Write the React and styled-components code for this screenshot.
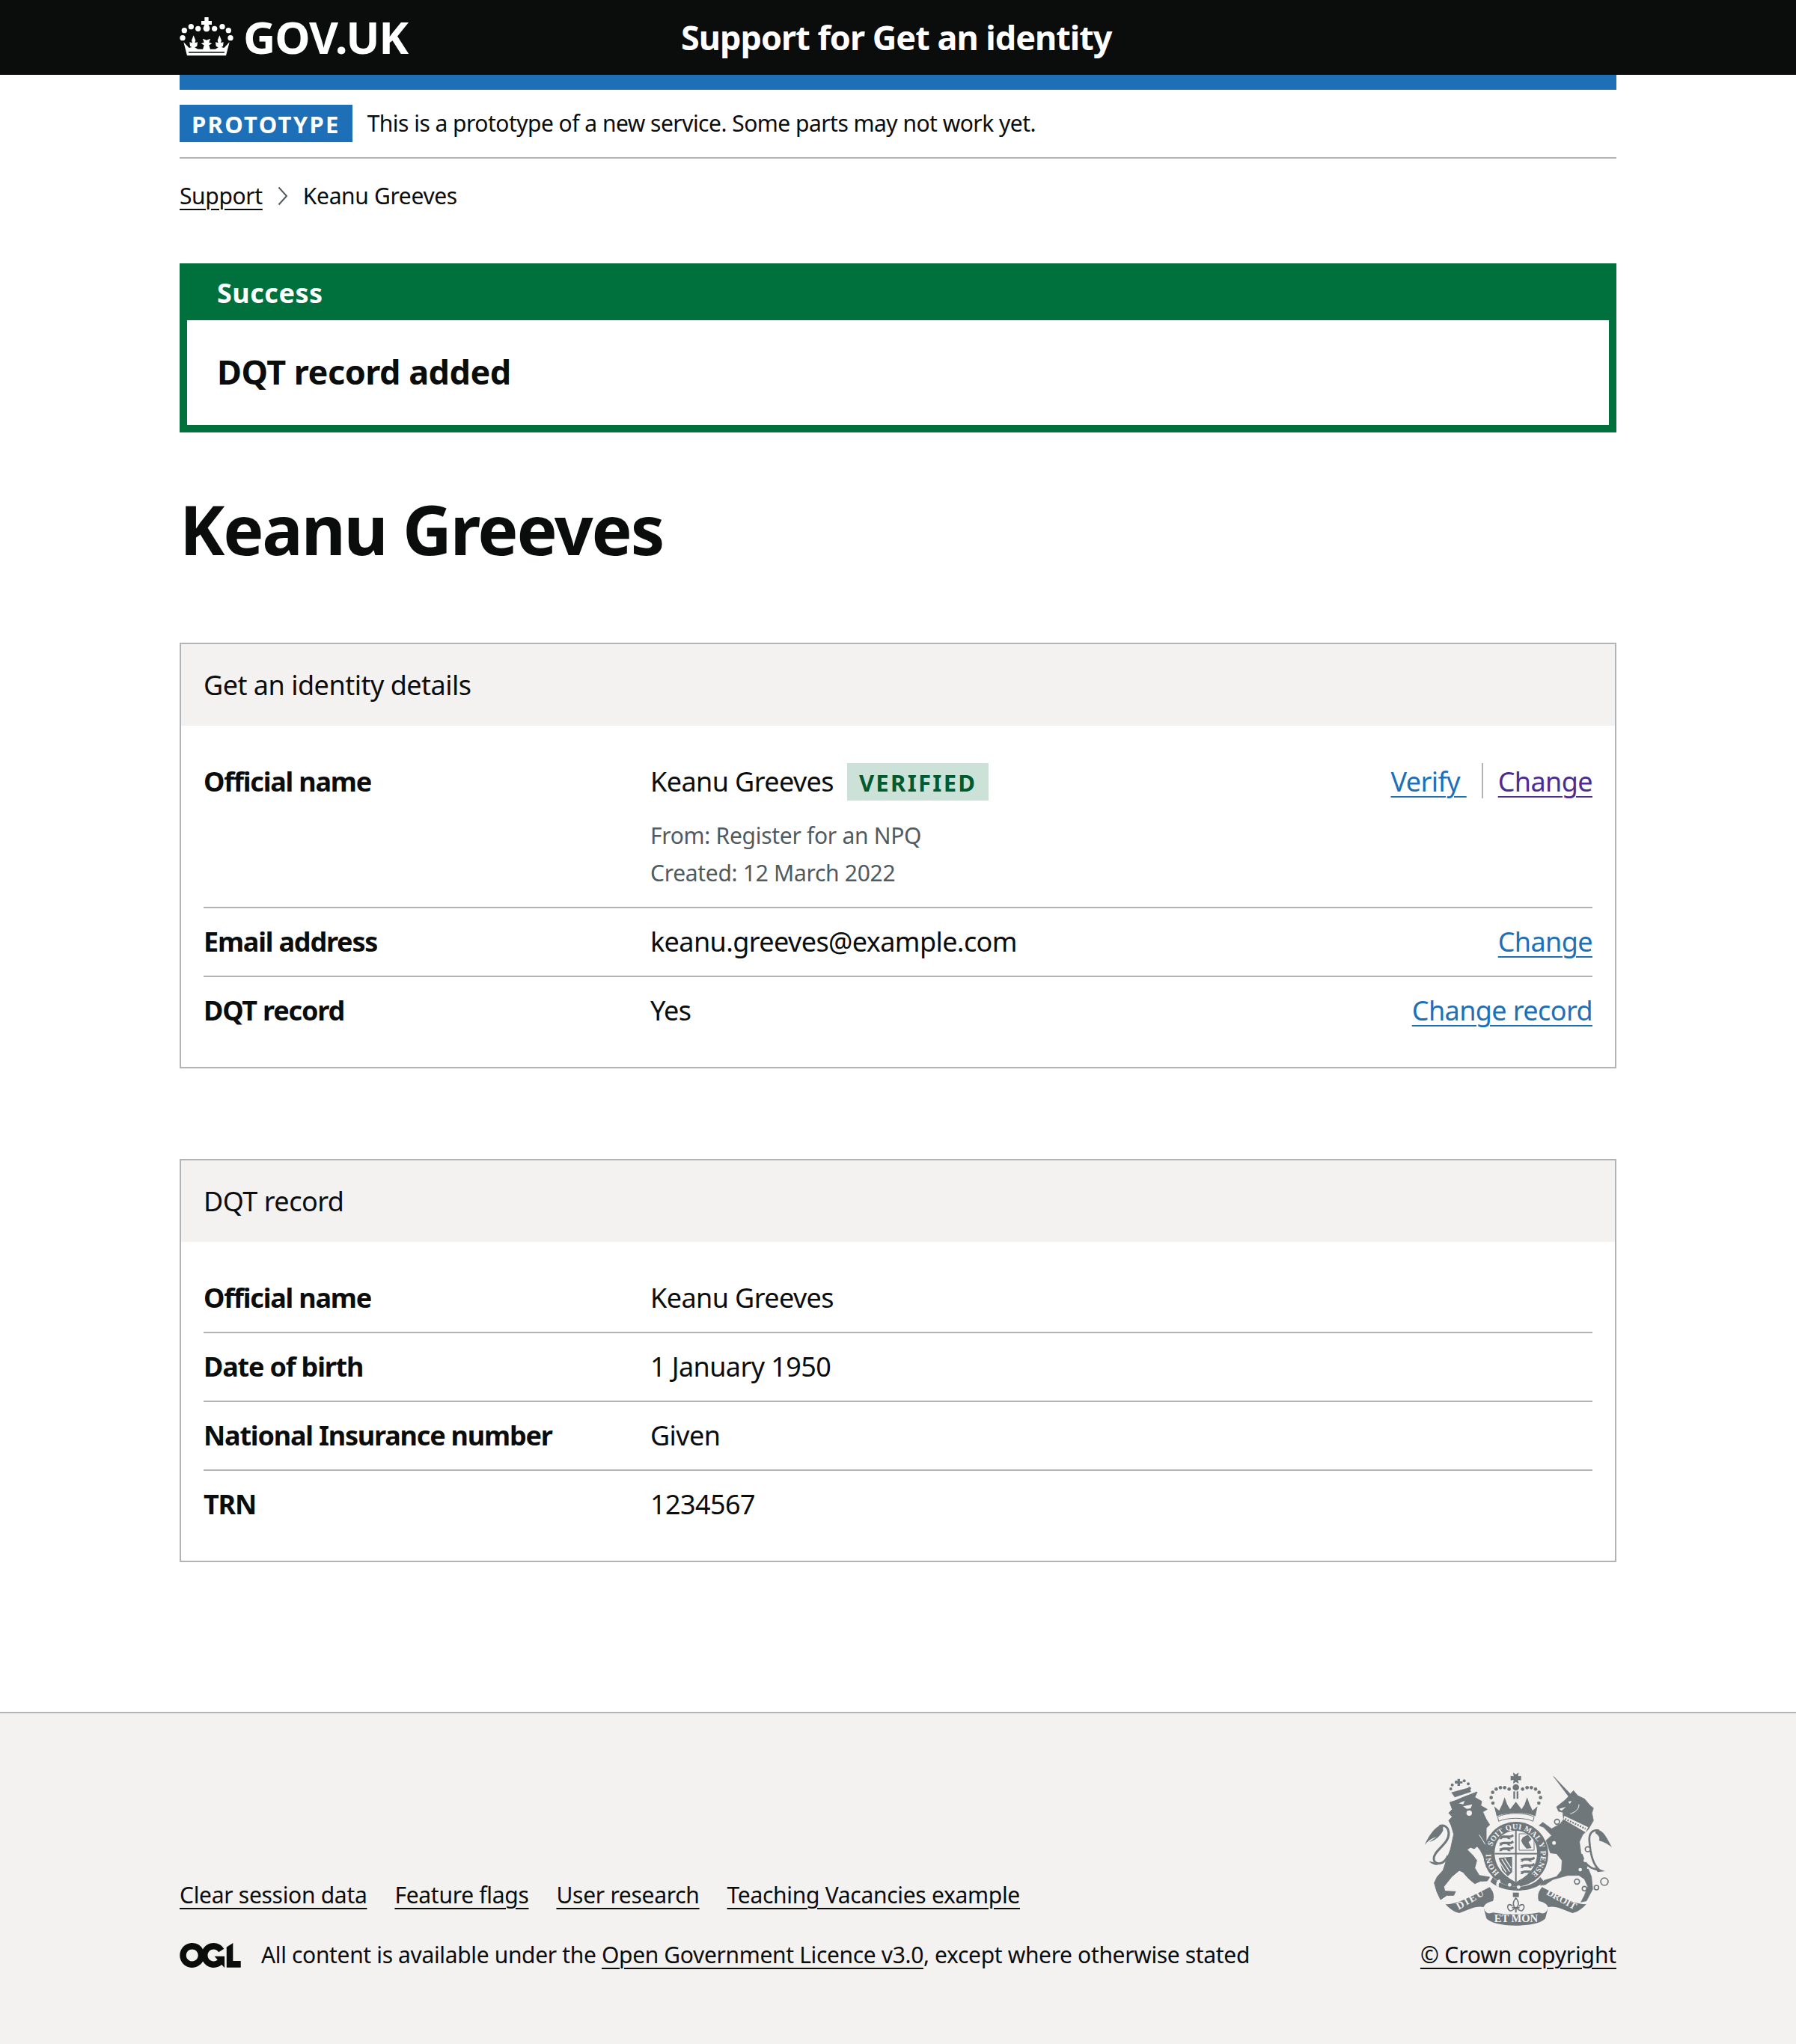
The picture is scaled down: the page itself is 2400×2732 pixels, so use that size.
import styled, { createGlobalStyle } from "styled-components";

const GlobalStyle = createGlobalStyle`
  html, body {
    margin: 0;
    padding: 0;
    background: #fff;
    color: #0b0c0c;
    font-family: "Noto Sans", Arial, sans-serif;
  }
  * { box-sizing: border-box; }
`;

const identityRows = [
  { key: "Email address", value: "keanu.greeves@example.com", actions: [{ label: "Change" }] },
  { key: "DQT record", value: "Yes", actions: [{ label: "Change record" }] },
];

const dqtRows = [
  { key: "Official name", value: "Keanu Greeves" },
  { key: "Date of birth", value: "1 January 1950" },
  { key: "National Insurance number", value: "Given" },
  { key: "TRN", value: "1234567" },
];

const footerLinks = ["Clear session data", "Feature flags", "User research", "Teaching Vacancies example"];

const crownDots = [
  [31, 65], [58, 50], [86, 58], [152, 58], [183, 50], [208, 65], [24, 95], [216, 95],
];

const CrownLogo = () => (
  <svg width="72" height="52" viewBox="12 12 216 156" fill="#fff" aria-hidden="true">
    <path d="M112 12h16v15h13v15h-13l5 12c1 9-4 16-13 16s-14-7-13-16l5-12h-13V27h13z" />
    {crownDots.map(([cx, cy]) => (
      <circle key={`${cx}-${cy}`} cx={cx} cy={cy} r="11" />
    ))}
    <path d="M28 112 L50 135 L68 130 L85 140 L155 140 L172 130 L190 135 L212 112 L198 166 L42 166 Z" />
    <path d="M68 85 L76 105 L73 115 L84 112 L82 128 L68 136 L54 128 L52 112 L63 115 L60 105 Z" />
    <path d="M172 85 L180 105 L177 115 L188 112 L186 128 L172 136 L158 128 L156 112 L167 115 L164 105 Z" />
    <path d="M105 98 L120 104 L135 98 L130 113 L142 118 L130 124 L135 142 L105 142 L110 124 L98 118 L110 113 Z" />
    <path d="M48 151 H192 V155 H48 Z" fill="#0b0c0c" />
  </svg>
);

const OglLogo = () => (
  <svg width="82" height="33" viewBox="0 0 483.200 195.700" aria-hidden="true">
    <path
      fill="#0b0c0c"
      d="M421.500 142.800V.1l-50.700 32.300v161.100h112.400v-50.700zm-122.300-9.600A47.120 47.120 0 0 1 221 97.800c0-26 21.100-47.100 47.100-47.100 16.700 0 31.400 8.700 39.700 21.800l42.700-27.200A97.630 97.630 0 0 0 268.100 0c-36.500 0-68.300 20.100-85.100 49.700A98 98 0 0 0 97.800 0C43.900 0 0 43.900 0 97.800s43.900 97.800 97.800 97.800c36.500 0 68.300-20.100 85.100-49.700a97.760 97.760 0 0 0 149.600 25.400l19.400 22.200h3v-87.800h-80l24.300 27.500zM97.800 145c-26 0-47.100-21.100-47.100-47.100s21.100-47.100 47.100-47.100 47.200 21 47.200 47S123.800 145 97.800 145"
    />
  </svg>
);

const INK = "#6f777b";
const PAPER = "#f3f2f1";
const SERIF = '"Liberation Serif", "Times New Roman", serif';

const archDots = [
  [285, 135], [278, 113], [284, 92], [298, 79], [315, 73], [332, 73], [350, 79],
  [469, 135], [476, 113], [470, 92], [456, 79], [439, 73], [422, 73], [404, 79],
];
const lionCrownDots = [
  [116, 78], [122, 62], [138, 50], [170, 46], [186, 58], [191, 76],
];
const rings = [
  [152, 210, 10], [140, 295, 10], [275, 320, 10], [232, 450, 10], [262, 478, 9], [310, 474, 9], [342, 450, 15],
];
const bodySpots = [
  [265, 365, 7], [245, 402, 7], [276, 395, 4],
];
const shieldLions = [
  [337, 270], [337, 295], [337, 318], [422, 360], [422, 385], [422, 410],
];

const RoyalArms = () => (
  <svg width="260" height="210" viewBox="0 0 780 630" aria-hidden="true">
    <defs>
      <clipPath id="shieldClip">
        <path d="M377 246 C420 246 462 275 462 335 C462 395 420 430 377 452 C335 430 292 395 292 335 C292 275 335 246 377 246 Z" />
      </clipPath>
    </defs>
    <g fill={INK}>
      {/* lion */}
      <path
        d="M112 132 L135 125 L165 112 L222 90 L212 112 L240 128 L236 145 L262 160 L244 170 L258 200 L272 222 L258 235 L258 290 L252 320 L280 350 L288 375 L270 395 L255 378 L248 350 L235 325 L222 308 L210 318 L195 312 L182 322 L205 345 L220 365 L212 395 L230 425 L272 432 L262 447 L235 448 L212 458 L188 438 L165 412 L150 405 L120 430 L88 470 L92 488 L135 490 L128 505 L100 505 L75 522 L60 490 L50 455 L62 430 L85 405 L100 360 L115 320 L128 260 L118 225 L108 205 L122 190 L108 175 L122 160 Z"
        stroke={INK}
        strokeWidth="3"
        strokeLinejoin="round"
      />
      <path d="M105 345 C90 385 50 385 48 360 C45 325 110 300 108 255 C105 225 85 222 70 228" fill="none" stroke={INK} strokeWidth="9" />
      <path d="M85 222 C60 222 30 260 12 302 C30 280 45 275 60 270 L30 290 C55 285 75 265 85 245 Z" />
      <path d="M48 372 L28 368 C40 380 55 385 65 384 Z" />
      <path d="M148 136 L172 126 L166 140 Z" fill={PAPER} />
      <path d="M165 148 L202 140 L196 156 L180 158 Z" fill={PAPER} />
      <circle cx="190" cy="175" r="11" fill={PAPER} />
      <path d="M230 262 L282 345" fill="none" stroke={PAPER} strokeWidth="3" />
      <path d="M118 92 L192 72 L197 90 L132 112 Z" />
      <path d="M143 38h10v10h10v8h-10v10h-10v-10h-10v-8h10z" />
      {lionCrownDots.map(([cx, cy]) => (
        <circle key={`${cx}-${cy}`} cx={cx} cy={cy} r="6" />
      ))}

      {/* central crown */}
      <path d="M366 13 L377 20 L388 13 L386 28 L398 26 L398 44 L386 42 L388 57 L377 50 L366 57 L368 42 L356 44 L356 26 L368 28 Z" />
      <circle cx="377" cy="72" r="13" />
      <rect x="367" y="88" width="7" height="30" />
      <rect x="380" y="88" width="7" height="30" />
      {archDots.map(([cx, cy]) => (
        <circle key={`${cx}-${cy}`} cx={cx} cy={cy} r="7" />
      ))}
      <path d="M290 148 L310 165 L322 140 L332 112 L342 140 L354 160 L377 130 L400 160 L412 140 L422 112 L432 140 L444 165 L464 148 L455 188 C420 170 335 170 300 188 Z" />

      {/* garter and shield */}
      <circle cx="377" cy="340" r="130" />
      <path d="M304 190 C340 172 415 172 450 190 L446 208 C415 192 340 192 308 208 Z" fill={PAPER} stroke={INK} strokeWidth="3" />
      <path d="M377 246 C420 246 462 275 462 335 C462 395 420 430 377 452 C335 430 292 395 292 335 C292 275 335 246 377 246 Z" fill={PAPER} />
      <g clipPath="url(#shieldClip)">
        <rect x="374" y="243" width="6" height="210" />
        <rect x="290" y="335" width="175" height="6" />
        {shieldLions.map(([x, y]) => (
          <path
            key={`${x}-${y}`}
            transform={`translate(${x} ${y})`}
            d="M-28 0 L-10 -5 L18 -5 L28 -10 L32 -2 L22 4 L14 4 L20 10 L10 10 L4 5 L-12 5 L-18 10 L-28 10 L-22 4 Z"
          />
        ))}
        <path d="M390 258h60v66h-60z" fill="none" stroke={INK} strokeWidth="3" />
        <path d="M405 272 L425 262 L440 280 L428 292 L440 315 L420 318 L405 300 L398 285 Z" />
        <path d="M308 355 L362 350 L362 412 L345 428 L322 404 Z" />
        <path d="M320 360 L352 410 M332 356 L358 396 M312 372 L338 412" stroke={PAPER} strokeWidth="4" fill="none" />
      </g>
      <path d="M285 432 C320 475 430 490 475 432 L490 450 C440 500 320 495 275 450 Z" />
      <path d="M300 470 C296 455 300 445 312 440 L316 452 C308 455 306 462 310 470 Z" fill={PAPER} />
      <circle cx="352" cy="463" r="7" fill={PAPER} />
      <circle cx="388" cy="472" r="7" fill={PAPER} />
      <path id="garterCircle" d="M377 440 A100 100 0 1 1 377.010 440 Z" fill="none" />
      <text fontFamily={SERIF} fontWeight="700" fontSize="31" fill={PAPER} letterSpacing="1">
        <textPath href="#garterCircle" startOffset="11.500%">HONI</textPath>
        <textPath href="#garterCircle" startOffset="30%">SOIT QUI MAL Y PENSE</textPath>
      </text>

      {/* unicorn */}
      <g transform="translate(390 0)">
        <path
          d="M138 28 L205 98 L218 85 L235 105 L262 118 L285 145 L298 155 L292 175 L298 205 L278 240 L255 262 L242 290 L248 335 L270 380 L290 430 L295 480 L270 527 L248 532 L262 505 L275 470 L262 440 L240 425 L195 425 L135 442 L105 462 L85 465 L100 445 L150 430 L170 405 L172 365 L150 338 L125 335 L108 285 L130 265 L98 232 L80 225 L95 212 L130 238 L165 218 L178 200 L175 172 L158 168 L150 150 L185 122 L198 108 Z"
          stroke={INK}
          strokeWidth="2"
          strokeLinejoin="round"
        />
        <path d="M178 200 L181 186 L277 232 L266 252 Z" fill={PAPER} />
        <path d="M184 198 L266 238" fill="none" stroke={INK} strokeWidth="7" strokeDasharray="6 5" />
        <path d="M160 158 L188 150 L170 166 Z" fill={PAPER} />
        <path d="M196 130 L210 126 L204 138 Z" fill={PAPER} />
        <path d="M240 140 C240 160 225 172 205 178" fill="none" stroke={PAPER} strokeWidth="3" />
        <path d="M250 340 C262 380 285 400 320 402 C295 380 285 330 282 290 C278 255 295 240 320 245" fill="none" stroke={INK} strokeWidth="8" />
        <path d="M300 392 L345 408 L315 412 Z" />
        <path d="M310 242 C335 240 350 270 372 312 C350 295 335 290 320 285 C325 275 320 265 305 255 Z" />
        {bodySpots.map(([cx, cy, r]) => (
          <circle key={`${cx}-${cy}`} cx={cx} cy={cy} r={r} fill={PAPER} />
        ))}
        {rings.map(([cx, cy, r]) => (
          <circle key={`${cx}-${cy}`} cx={cx} cy={cy} r={r} fill={PAPER} stroke={INK} strokeWidth="5" />
        ))}
      </g>

      {/* motto ribbon */}
      <path d="M95 540 C130 545 200 510 272 472 C288 490 292 510 285 528 C265 532 252 540 248 552 C220 545 190 560 150 576 C130 572 110 558 95 540 Z" />
      <path d="M659 540 C624 545 554 510 482 472 C466 490 462 510 469 528 C489 532 502 540 506 552 C534 545 564 560 604 576 C624 572 644 558 659 540 Z" />
      <path d="M248 556 C255 575 265 582 285 574 C340 584 420 584 470 574 C490 582 499 575 506 556 L495 598 C480 615 440 626 377 626 C315 626 275 615 259 598 Z" />
      <rect x="365" y="494" width="24" height="18" />
      <path d="M377 516 C360 534 368 552 377 560 C386 552 394 534 377 516 Z" fill={PAPER} stroke={INK} strokeWidth="5" />
      <path d="M364 548 C344 530 338 556 352 566 C358 569 368 562 373 556" fill={PAPER} stroke={INK} strokeWidth="5" />
      <path d="M390 548 C410 530 416 556 402 566 C396 569 386 562 381 556" fill={PAPER} stroke={INK} strokeWidth="5" />
      <path d="M362 554 H392 M377 560 V574" fill="none" stroke={INK} strokeWidth="6" />
      <g fontFamily={SERIF} fontWeight="700" fill={PAPER}>
        <text x="148" y="563" transform="rotate(-30 148 563)" fontSize="42" letterSpacing="5">DIEU</text>
        <text x="290" y="611" fontSize="44">ET MON</text>
        <text x="497" y="500" transform="rotate(29 497 500)" fontSize="40">DROIT</text>
      </g>
    </g>
  </svg>
);

const Chevron = () => (
  <svg width="14" height="26" viewBox="0 0 14 26" fill="none" aria-hidden="true">
    <path d="M1.500 1.500 L12 13 L1.500 24.500" stroke="#505a5f" strokeWidth="2" />
  </svg>
);

const Page = styled.div`
  min-height: 2732px;
  display: flex;
  flex-direction: column;
`;

const HeaderBar = styled.header`
  height: 100px;
  background: #0b0c0c;
`;

const Container = styled.div`
  width: 1920px;
  margin: 0 auto;
`;

const HeaderInner = styled(Container)`
  display: flex;
  align-items: center;
  height: 98px;
`;

const LogoBlock = styled.a`
  display: flex;
  align-items: center;
  gap: 13px;
  width: 670px;
  color: #fff;
  font-size: 60px;
  font-weight: 700;
  letter-spacing: -1.200px;
  line-height: 98px;
`;

const ServiceName = styled.span`
  color: #fff;
  font-size: 45px;
  font-weight: 700;
  letter-spacing: -1px;
`;

const BlueStrip = styled.div`
  height: 20px;
  background: #1d70b8;
`;

const PhaseBanner = styled.div`
  display: flex;
  align-items: center;
  gap: 20px;
  padding: 20px 0;
  border-bottom: 2px solid #b1b4b6;
`;

const Tag = styled.strong`
  display: inline-block;
  height: 50px;
  padding: 0 16px;
  background: ${(p) => p.$bg};
  color: ${(p) => p.$fg};
  font-size: 31px;
  font-weight: 700;
  line-height: 52px;
  letter-spacing: 2.300px;
  text-transform: uppercase;
`;

const PhaseText = styled.span`
  font-size: 30px;
  line-height: 40px;
  letter-spacing: -0.520px;
`;

const Breadcrumbs = styled.nav`
  display: flex;
  align-items: center;
  gap: 20px;
  margin-top: 30px;
  font-size: 30px;
  line-height: 40px;
  letter-spacing: -0.350px;
`;

const PlainLink = styled.a`
  color: #0b0c0c;
  text-decoration: underline;
  text-decoration-thickness: 2px;
  text-underline-offset: 6px;
  white-space: nowrap;
`;

const SuccessBanner = styled.section`
  margin-top: 70px;
  border: 10px solid #00703c;
  background: #00703c;
`;

const SuccessTitle = styled.h2`
  margin: 0;
  height: 66px;
  padding-left: 40px;
  color: #fff;
  font-size: 36px;
  font-weight: 700;
  line-height: 60px;
  letter-spacing: 0.500px;
`;

const SuccessBody = styled.div`
  height: 140px;
  padding-left: 40px;
  background: #fff;
  font-size: 45px;
  font-weight: 700;
  line-height: 138px;
  letter-spacing: -0.500px;
`;

const Title = styled.h1`
  margin: 79px 0 0;
  font-size: 91px;
  font-weight: 700;
  line-height: 100px;
  letter-spacing: -2.200px;
`;

const Card = styled.section`
  margin-top: ${(p) => p.$top}px;
  border: 2px solid #b1b4b6;
`;

const CardHeader = styled.h2`
  margin: 0;
  height: 109px;
  padding: 0 30px;
  background: #f3f2f1;
  font-size: 36px;
  font-weight: 400;
  line-height: 110px;
  letter-spacing: -0.500px;
`;

const CardBody = styled.div`
  padding: 30px;
`;

const Row = styled.div`
  display: flex;
  padding: 20px 0;
  border-bottom: ${(p) => (p.$last ? "none" : "2px solid #b1b4b6")};
  font-size: 36px;
  line-height: 50px;
  letter-spacing: -0.600px;
`;

const Key = styled.div`
  width: 597px;
  flex: none;
  font-weight: 700;
  letter-spacing: -1.200px;
`;

const Value = styled.div`
  flex: 1;
`;

const NameLine = styled.div`
  display: flex;
  gap: 18px;
  margin-bottom: 22px;
`;

const Hint = styled.div`
  color: #505a5f;
  font-size: 30px;
  letter-spacing: -0.300px;
`;

const Actions = styled.div`
  display: flex;
  align-items: flex-start;
`;

const ActionLink = styled.a`
  height: 47px;
  padding-left: ${(p) => (p.$divided ? "20px" : "0")};
  padding-right: ${(p) => (p.$first ? "20px" : "0")};
  border-left: ${(p) => (p.$divided ? "2px solid #b1b4b6" : "none")};
  color: ${(p) => (p.$visited ? "#4c2c92" : "#1d70b8")};
  text-decoration: underline;
  text-decoration-thickness: 2px;
  text-underline-offset: 6px;
  white-space: pre;
`;

const Footer = styled.footer`
  margin-top: auto;
  height: 444px;
  border-top: 2px solid #b1b4b6;
  background: #f3f2f1;
`;

const FooterInner = styled(Container)`
  display: flex;
  justify-content: space-between;
  align-items: flex-end;
  padding-top: 75px;
`;

const FooterLeft = styled.div`
  display: flex;
  flex-direction: column;
  gap: 40px;
  font-size: 30px;
  line-height: 40px;
`;

const FooterLinks = styled.div`
  display: flex;
  gap: 37px;
  letter-spacing: -0.300px;
`;

const Licence = styled.div`
  display: flex;
  align-items: center;
  gap: 27px;
  letter-spacing: -0.350px;
`;

const FooterRight = styled.div`
  display: flex;
  flex-direction: column;
  align-items: flex-end;
  gap: 18px;
  font-size: 30px;
  line-height: 40px;
  letter-spacing: -0.150px;
`;

const ArmsWrap = styled.div`
  display: flex;
`;

export default function App() {
  return (
    <Page>
      <GlobalStyle />
      <HeaderBar>
        <HeaderInner>
          <LogoBlock>
            <CrownLogo />
            GOV.UK
          </LogoBlock>
          <ServiceName>Support for Get an identity</ServiceName>
        </HeaderInner>
      </HeaderBar>
      <Container>
        <BlueStrip />
        <PhaseBanner>
          <Tag $bg="#1d70b8" $fg="#fff">Prototype</Tag>
          <PhaseText>This is a prototype of a new service. Some parts may not work yet.</PhaseText>
        </PhaseBanner>
        <Breadcrumbs>
          <PlainLink>Support</PlainLink>
          <Chevron />
          <span>Keanu Greeves</span>
        </Breadcrumbs>
        <SuccessBanner>
          <SuccessTitle>Success</SuccessTitle>
          <SuccessBody>DQT record added</SuccessBody>
        </SuccessBanner>
        <Title>Keanu Greeves</Title>

        <Card $top={102}>
          <CardHeader>Get an identity details</CardHeader>
          <CardBody>
            <Row>
              <Key>Official name</Key>
              <Value>
                <NameLine>
                  Keanu Greeves
                  <Tag $bg="#cce2d8" $fg="#005a30">Verified</Tag>
                </NameLine>
                <Hint>From: Register for an NPQ</Hint>
                <Hint>Created: 12 March 2022</Hint>
              </Value>
              <Actions>
                <ActionLink $first>{"Verify "}</ActionLink>
                <ActionLink $divided $visited>Change</ActionLink>
              </Actions>
            </Row>
            {identityRows.map((row, i) => (
              <Row key={row.key} $last={i === identityRows.length - 1}>
                <Key>{row.key}</Key>
                <Value>{row.value}</Value>
                <Actions>
                  {row.actions.map((action) => (
                    <ActionLink key={action.label}>{action.label}</ActionLink>
                  ))}
                </Actions>
              </Row>
            ))}
          </CardBody>
        </Card>

        <Card $top={121}>
          <CardHeader>DQT record</CardHeader>
          <CardBody>
            {dqtRows.map((row, i) => (
              <Row key={row.key} $last={i === dqtRows.length - 1}>
                <Key>{row.key}</Key>
                <Value>{row.value}</Value>
              </Row>
            ))}
          </CardBody>
        </Card>
      </Container>

      <Footer>
        <FooterInner>
          <FooterLeft>
            <FooterLinks>
              {footerLinks.map((label) => (
                <PlainLink key={label}>{label}</PlainLink>
              ))}
            </FooterLinks>
            <Licence>
              <OglLogo />
              <span>
                All content is available under the <PlainLink>Open Government Licence v3.0</PlainLink>, except where otherwise stated
              </span>
            </Licence>
          </FooterLeft>
          <FooterRight>
            <ArmsWrap>
              <RoyalArms />
            </ArmsWrap>
            <PlainLink>© Crown copyright</PlainLink>
          </FooterRight>
        </FooterInner>
      </Footer>
    </Page>
  );
}
